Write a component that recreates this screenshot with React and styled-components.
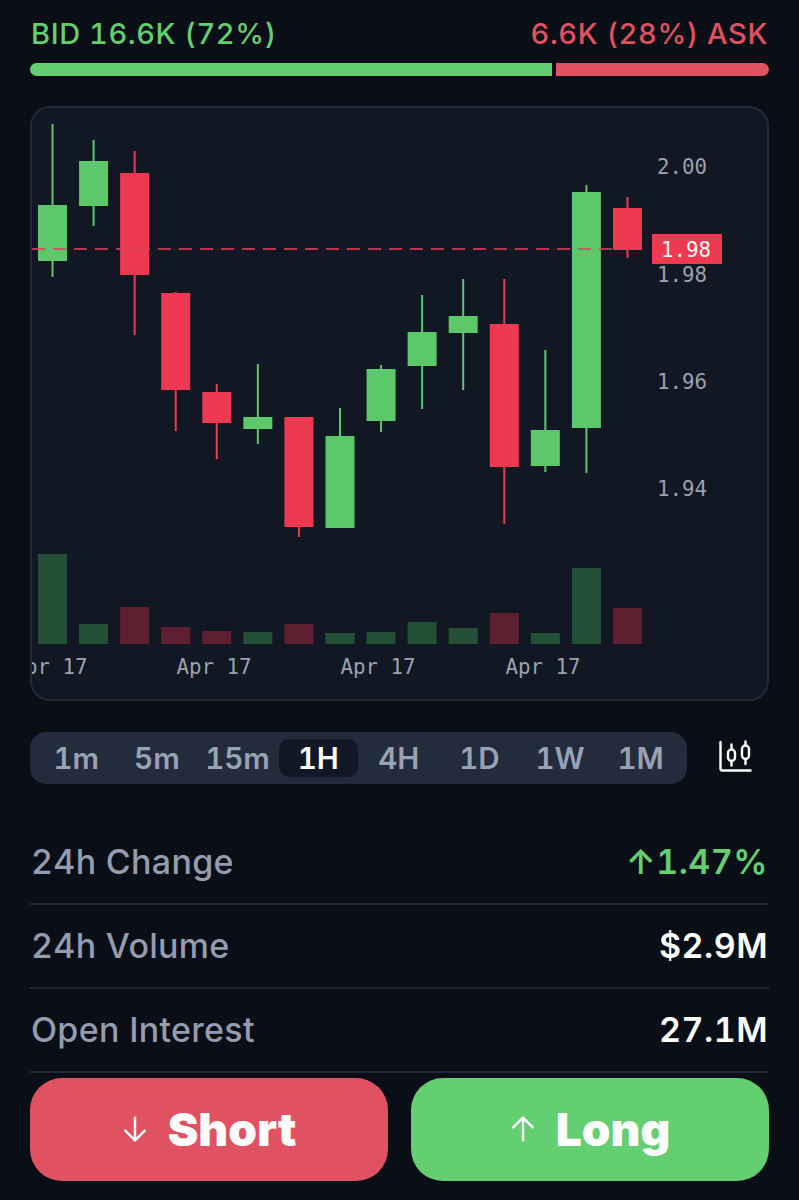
import React from 'react';
import styled, {createGlobalStyle} from 'styled-components';

const GREEN='#63cf70';
const RED='#e05262';

const GlobalStyle=createGlobalStyle`
html, body {
    margin: 0;
    padding: 0;
    background-color: #0a0e16;
}
* {
    box-sizing: border-box;
}
`;

const Page=styled.div`
width: 799px;
height: 1200px;
padding: 0 30px;
overflow: hidden;
font-family: Inter, "Liberation Sans", sans-serif;
font-variant-numeric: tabular-nums;
background-color: #0a0e16;
`;

const BookLabels=styled.div`
display: flex;
justify-content: space-between;
align-items: center;
height: 34px;
margin-top: 16px;
padding: 0 1px;
font-size: 29px;
font-weight: 500;
letter-spacing: 0.6px;
`;

const BookLabel=styled.span`
color: ${p=>p.$side==='bid'?GREEN:RED};
`;

const Bar=styled.div`
display: flex;
gap: 4px;
height: 13px;
margin-top: 13px;
`;

const BarPart=styled.div`
background-color: ${p=>p.$side==='bid'?GREEN:RED};
border-radius: ${p=>p.$side==='bid'?'7px 0 0 7px':'0 7px 7px 0'};
`;

const ChartPanel=styled.div`
height: 595px;
margin-top: 30px;
background-color: #111723;
border: 2px solid #222937;
border-radius: 20px;
overflow: hidden;
`;

const ChartSvg=styled.svg`
display: block;
`;

const Wick=styled.rect`
fill: ${p=>p.$up?'#5cc86a':'#ee3a50'};
`;

const Body=styled.rect`
fill: ${p=>p.$up?'#5cc86a':'#ee3a50'};
`;

const Volume=styled.rect`
fill: ${p=>p.$up?'#235036':'#5e1f31'};
`;

const AxisText=styled.text`
fill: #9aa1ad;
font-family: "DejaVu Sans Mono", "Liberation Mono", monospace;
font-size: 20.8px;
`;

const PriceTag=styled.rect`
fill: #ee3a50;
`;

const PriceTagText=styled.text`
fill: #ffffff;
font-family: "DejaVu Sans Mono", "Liberation Mono", monospace;
font-size: 20.8px;
`;

const PriceLine=styled.line`
stroke: #e0415a;
stroke-width: 2;
stroke-dasharray: 13 8;
opacity: 0.8;
`;

const TimeRow=styled.div`
display: flex;
align-items: center;
margin-top: 31px;
`;

const TimeTabs=styled.div`
display: grid;
grid-template-columns: repeat(8, 1fr);
align-items: center;
width: 657px;
height: 52px;
padding: 0 6px;
background-color: #222c3d;
border-radius: 16px;
`;

const TimeTab=styled.div`
display: flex;
align-items: center;
justify-content: center;
height: 38px;
margin: 0 ${p=>p.$active?'1px':'0'};
font-size: 29.5px;
font-weight: 600;
color: ${p=>p.$active?'#ffffff':'#99a2b5'};
background-color: ${p=>p.$active?'#131826':'transparent'};
border-radius: 10px;
`;

const ChartToggle=styled.div`
display: flex;
margin-left: 32px;
margin-top: -4px;
`;

const Stats=styled.div`
margin-top: 37px;
`;

const StatRow=styled.div`
display: flex;
justify-content: space-between;
align-items: center;
height: 84px;
padding: 0 1px 2px;
border-bottom: 2px solid #1f2636;
`;

const StatName=styled.span`
font-size: 34px;
font-weight: 500;
letter-spacing: 0.3px;
color: #949cb0;
`;

const StatValue=styled.span`
font-size: 34px;
font-weight: 600;
letter-spacing: 0.5px;
color: ${p=>p.$green?GREEN:'#ffffff'};
`;

const Actions=styled.div`
display: flex;
gap: 23px;
margin-top: 5px;
`;

const ActionButton=styled.div`
flex: 1;
display: flex;
align-items: center;
justify-content: center;
gap: 20px;
height: 103px;
padding-bottom: 2px;
border-radius: 32px;
background-color: ${p=>p.$side==='short'?RED:GREEN};
color: #ffffff;
font-size: 46px;
font-weight: 900;
`;

const candles=[
    {up:true,top:205,bottom:261,high:124,low:277,vol:554},
    {up:true,top:161,bottom:206,high:140,low:226,vol:624},
    {up:false,top:173,bottom:275,high:151,low:335,vol:607},
    {up:false,top:293,bottom:390,high:292,low:431,vol:627},
    {up:false,top:392,bottom:423,high:384,low:459,vol:631},
    {up:true,top:417,bottom:429,high:364,low:444,vol:632},
    {up:false,top:417,bottom:527,high:417,low:537,vol:624},
    {up:true,top:436,bottom:528,high:408,low:528,vol:633},
    {up:true,top:369,bottom:421,high:365,low:432,vol:632},
    {up:true,top:332,bottom:366,high:295,low:409,vol:622},
    {up:true,top:316,bottom:333,high:279,low:390,vol:628},
    {up:false,top:324,bottom:467,high:279,low:524,vol:613},
    {up:true,top:430,bottom:466,high:350,low:472,vol:633},
    {up:true,top:192,bottom:428,high:185,low:473,vol:568},
    {up:false,top:208,bottom:250,high:197,low:258,vol:608},
];

const prices=[{label:'2.00',y:174},{label:'1.98',y:282},{label:'1.96',y:389},{label:'1.94',y:496}];
const dates=[50,214,378,543];
const tabs=['1m','5m','15m','1H','4H','1D','1W','1M'];

const Chart=()=>{
    return(
        <ChartSvg width='735' height='591' viewBox='32 108 735 591'>
            {candles.map((c,i)=>{
                const center=52.5+i*41.07;
                return(
                    <g key={i}>
                        <Volume $up={c.up} x={center-14.5} y={c.vol} width='29' height={644-c.vol}/>
                        <Wick $up={c.up} x={center-1} y={c.high} width='2' height={c.low-c.high}/>
                        <Body $up={c.up} x={center-14.5} y={c.top} width='29' height={c.bottom-c.top}/>
                    </g>
                )
            })}
            <PriceLine x1='32' y1='249' x2='622' y2='249'/>
            {prices.map(p=><AxisText key={p.label} x='657' y={p.y}>{p.label}</AxisText>)}
            <PriceTag x='652' y='234' width='70' height='30'/>
            <PriceTagText x='661' y='257'>1.98</PriceTagText>
            {dates.map(x=><AxisText key={x} x={x} y='674' textAnchor='middle'>Apr 17</AxisText>)}
        </ChartSvg>
    )
}

const CandleIcon=()=>(
    <svg width='33' height='33' viewBox='0 0 33 33' fill='none' stroke='#ffffff' strokeWidth='2.4' strokeLinecap='round' strokeLinejoin='round'>
        <path d='M1.5 2v26.5q0 2 2 2h28'/>
        <path d='M12.5 4.5v5M12.5 21v4.5M26.5 1.5v4M26.5 19v5'/>
        <rect x='9' y='9.5' width='7' height='11.5' rx='3.5'/>
        <rect x='23' y='5.5' width='7' height='13.5' rx='3.5'/>
    </svg>
)

const ArrowIcon=({down})=>(
    <svg width='26' height='26' viewBox='4 5 16 14' fill='none' stroke='#ffffff' strokeWidth='1.5' strokeLinecap='round' strokeLinejoin='round'>
        {down
        ?<path d='M12 5v14M6 13l6 6 6-6'/>
        :<path d='M12 19V5M6 11l6-6 6 6'/>}
    </svg>
)

const App=()=>{
    return(
        <Page>
            <GlobalStyle/>
            <BookLabels>
                <BookLabel $side='bid'>BID 16.6K (72%)</BookLabel>
                <BookLabel $side='ask'>6.6K (28%) ASK</BookLabel>
            </BookLabels>
            <Bar>
                <BarPart $side='bid' style={{width:'522px'}}/>
                <BarPart $side='ask' style={{width:'213px'}}/>
            </Bar>
            <ChartPanel>
                <Chart/>
            </ChartPanel>
            <TimeRow>
                <TimeTabs>
                    {tabs.map(t=><TimeTab key={t} $active={t==='1H'}>{t}</TimeTab>)}
                </TimeTabs>
                <ChartToggle>
                    <CandleIcon/>
                </ChartToggle>
            </TimeRow>
            <Stats>
                <StatRow>
                    <StatName>24h Change</StatName>
                    <StatValue $green>↑1.47%</StatValue>
                </StatRow>
                <StatRow>
                    <StatName>24h Volume</StatName>
                    <StatValue>$2.9M</StatValue>
                </StatRow>
                <StatRow>
                    <StatName>Open Interest</StatName>
                    <StatValue>27.1M</StatValue>
                </StatRow>
            </Stats>
            <Actions>
                <ActionButton $side='short'><ArrowIcon down/>Short</ActionButton>
                <ActionButton $side='long'><ArrowIcon/>Long</ActionButton>
            </Actions>
        </Page>
    )
}

export default App;
